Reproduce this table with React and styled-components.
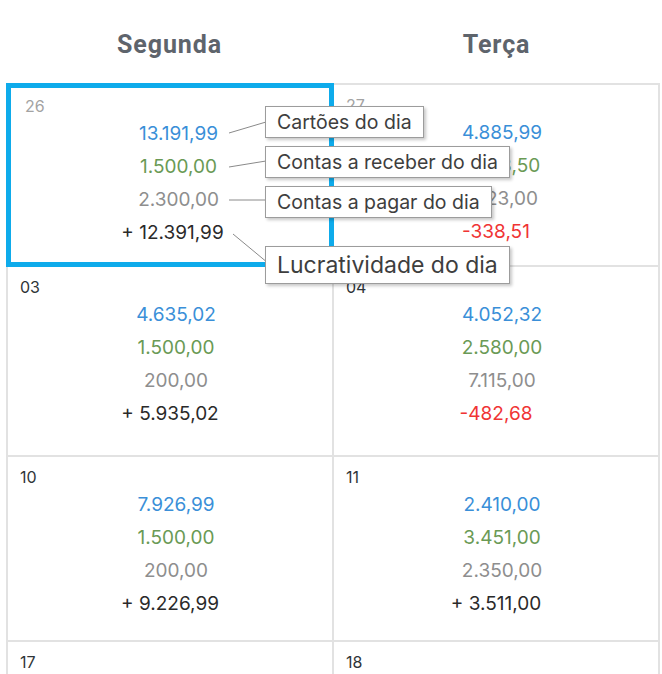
import React from "react";
import styled, { createGlobalStyle } from "styled-components";

const GlobalStyle = createGlobalStyle`
  body {
    margin: 0;
    background: #ffffff;
    font-family: Inter, Roboto, "Liberation Sans", sans-serif;
  }
`

const Page = styled.div`
  position: relative;
  width: 662px;
  height: 674px;
  overflow: hidden;
  padding-left: 6px;
  box-sizing: border-box;
`

const HeaderRow = styled.div`
  display: grid;
  grid-template-columns: 1fr 1fr;
  width: 654px;
  height: 83px;
  align-items: center;
  padding-top: 6px;
  box-sizing: border-box;
`

const DayName = styled.div`
  text-align: center;
  font-family: Roboto, "Liberation Sans", sans-serif;
  font-size: 25px;
  font-weight: 700;
  letter-spacing: 0.9px;
  color: #5e646c;
`

const Grid = styled.div`
  display: grid;
  grid-template-columns: 1fr 1fr;
  grid-template-rows: 182px 190px 185px 80px;
  width: 654px;
  border-top: 2px solid #e2e2e2;
  border-left: 2px solid #e2e2e2;
  box-sizing: border-box;
`

const Cell = styled.div`
  position: relative;
  border-right: 2px solid #e2e2e2;
  border-bottom: 2px solid #e2e2e2;
  padding: ${p => (p.$active ? "11px 12px 0 17px" : "10px 12px 0 12px")};
  box-sizing: border-box;

  &::after {
    content: "";
    display: ${p => (p.$active ? "block" : "none")};
    position: absolute;
    top: -2px;
    left: -2px;
    right: -2px;
    bottom: -2px;
    border: 5px solid #0eabeb;
    pointer-events: none;
  }
`

const DayNum = styled.div`
  font-size: 16px;
  line-height: 20px;
  color: ${p => (p.$muted ? "#a3a3a3" : "#2f3538")};
`

const Values = styled.div`
  display: flex;
  flex-direction: column;
  align-items: center;
  margin-top: 1px;
  padding-left: 12px;
`

const colors = {
  cards: "#3a8fd8",
  receive: "#6a9a55",
  pay: "#8e8e8e",
  profit: "#2a2a2a",
  loss: "#f03434",
}

const Value = styled.div`
  font-size: 19px;
  line-height: 33px;
  color: ${p => colors[p.$kind]};
  padding-right: ${p => (p.$kind === "profit" || p.$kind === "loss" ? "12px" : "0")};
`

const Lines = styled.svg`
  position: absolute;
  left: 0;
  top: 0;
  pointer-events: none;
`

const Callout = styled.div`
  position: absolute;
  left: ${p => p.$x}px;
  top: ${p => p.$y}px;
  height: ${p => (p.$big ? 38 : 32)}px;
  line-height: ${p => (p.$big ? 36 : 30)}px;
  padding: 0 11px;
  box-sizing: border-box;
  background: #ffffff;
  border: 1px solid #9c9c9c;
  box-shadow: 2px 2px 3px rgba(0, 0, 0, 0.22);
  font-size: ${p => (p.$big ? 23 : 19.5)}px;
  color: #3e3e3e;
  white-space: nowrap;
`

const weeks = [
  [
    { day: "26", muted: true, active: true, cards: "13.191,99", receive: "1.500,00", pay: "2.300,00", profit: "+ 12.391,99" },
    { day: "27", muted: true, cards: "4.885,99", receive: "1.898,50", pay: "7.123,00", profit: "-338,51", loss: true },
  ],
  [
    { day: "03", cards: "4.635,02", receive: "1.500,00", pay: "200,00", profit: "+ 5.935,02" },
    { day: "04", cards: "4.052,32", receive: "2.580,00", pay: "7.115,00", profit: "-482,68", loss: true },
  ],
  [
    { day: "10", cards: "7.926,99", receive: "1.500,00", pay: "200,00", profit: "+ 9.226,99" },
    { day: "11", cards: "2.410,00", receive: "3.451,00", pay: "2.350,00", profit: "+ 3.511,00" },
  ],
  [{ day: "17" }, { day: "18" }],
]

const DayCell = ({ d }) => (
  <Cell $active={d.active}>
    <DayNum $muted={d.muted}>{d.day}</DayNum>
    {d.cards && (
      <Values>
        <Value $kind="cards">{d.cards}</Value>
        <Value $kind="receive">{d.receive}</Value>
        <Value $kind="pay">{d.pay}</Value>
        <Value $kind={d.loss ? "loss" : "profit"}>{d.profit}</Value>
      </Values>
    )}
  </Cell>
)

const App = () => {
  return (
    <Page>
      <GlobalStyle />
      <HeaderRow>
        <DayName>Segunda</DayName>
        <DayName>Terça</DayName>
      </HeaderRow>
      <Grid>
        {weeks.flat().map(d => (
          <DayCell key={d.day} d={d} />
        ))}
      </Grid>

      <Lines width="662" height="674">
        <g stroke="#8a8a8a" strokeWidth="1">
          <line x1="229" y1="133" x2="266" y2="122" />
          <line x1="229" y1="167" x2="266" y2="161" />
          <line x1="229" y1="200" x2="266" y2="200" />
          <line x1="233" y1="234" x2="268" y2="263" />
        </g>
      </Lines>
      <Callout $x={265} $y={106}>Cartões do dia</Callout>
      <Callout $x={265} $y={146}>Contas a receber do dia</Callout>
      <Callout $x={265} $y={186}>Contas a pagar do dia</Callout>
      <Callout $x={265} $y={246} $big>Lucratividade do dia</Callout>
    </Page>
  )
}

export default App
